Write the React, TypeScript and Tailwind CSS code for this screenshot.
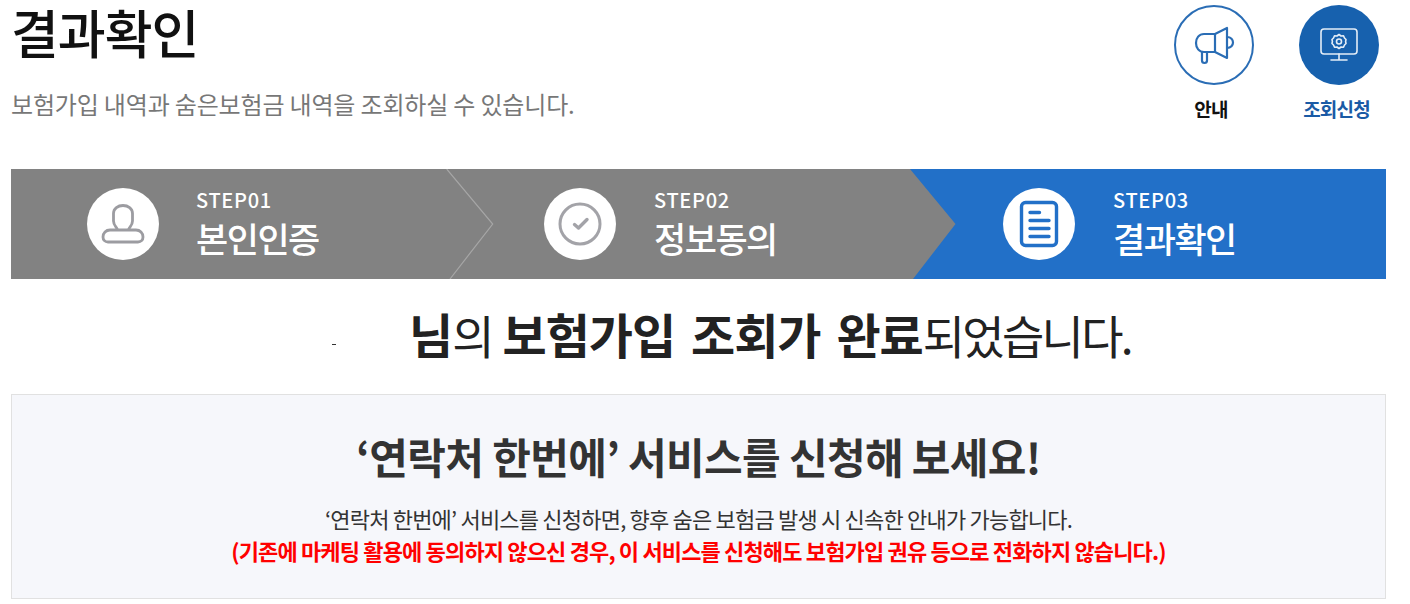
const font = { fontFamily: '"Noto Sans CJK KR", "Noto Sans", sans-serif' };

function Megaphone() {
  return (
    <svg width="46" height="46" viewBox="0 0 46 46" fill="none" stroke="#2a6db5" strokeWidth="2.2" strokeLinejoin="round" strokeLinecap="round">
      <path d="M13 12H24V30H13C8 30 5 26 5 21C5 16 8 12 13 12Z" />
      <path d="M24 12L36 6V36L24 30" />
      <path d="M36 15C40 15 42 18 42 20.500C42 23 40 26 36 26" />
      <path d="M11 30V38.500C11 40 12 41 13.500 41C15 41 16 40 16 38.500V30" />
    </svg>
  );
}

function Monitor() {
  return (
    <svg width="38" height="34" viewBox="0 0 38 34" fill="none" stroke="#e4edf7" strokeWidth="1.6" strokeLinejoin="round" strokeLinecap="round">
      <rect x="1" y="1" width="36" height="25" rx="3" />
      <path d="M19 26V32M11 32H27" />
      <circle cx="19" cy="13.500" r="2.500" />
      <path d="M19 6.500L21 8L23.500 7.800L24.500 10L26 11.500L25.600 13.500L26 15.500L24.500 17L23.500 19.200L21 19L19 20.500L17 19L14.500 19.200L13.500 17L12 15.500L12.400 13.500L12 11.500L13.500 10L14.500 7.800L17 8Z" />
    </svg>
  );
}

function Person() {
  return (
    <svg width="44" height="44" viewBox="0 0 44 44" fill="none" stroke="#9c9ca1" strokeWidth="2.800" strokeLinejoin="round">
      <path d="M16.500 28C16.500 25.500 12.500 24 12.500 19V11.500C12.500 6.500 17 3.500 22 3.500C27 3.500 31.500 6.500 31.500 11.500V19C31.500 24 27.500 25.500 27.500 28" />
      <path d="M9 28H35C39 28 42 31 42 35C42 38 40 40 37 40H7C4 40 2 38 2 35C2 31 5 28 9 28Z" />
    </svg>
  );
}

function Check() {
  return (
    <svg width="46" height="46" viewBox="0 0 46 46" fill="none" stroke="#a3a3a8" strokeLinecap="round" strokeLinejoin="round">
      <circle cx="23" cy="23" r="20" strokeWidth="3" />
      <path d="M17.500 23.500L21.500 27L30 18.500" strokeWidth="3.400" />
    </svg>
  );
}

function Doc() {
  return (
    <svg width="40" height="48" viewBox="0 0 40 48" fill="none" stroke="#2270c8" strokeWidth="3.400" strokeLinecap="round">
      <rect x="2.500" y="2.500" width="35" height="43" rx="4" />
      <path d="M11 12.500H20.500M11 20.500H30M11 28.500H30M11 36.500H30" />
    </svg>
  );
}

function Step({ no, title, icon, width, gap }: { no: string; title: string; icon: React.ReactNode; width: string; gap: string }) {
  return (
    <div className={`relative flex items-center pl-[76px] ${width}`}>
      <div className="flex h-[72px] w-[72px] shrink-0 items-center justify-center rounded-full bg-white">{icon}</div>
      <div className={`${gap} text-white`}>
        <div className="text-[20px] font-medium leading-[24px] tracking-[0.7px]">{no}</div>
        <div className="mt-[3px] text-[35px] font-medium leading-[46px] tracking-[-1.5px]">{title}</div>
      </div>
    </div>
  );
}

export default function App() {
  return (
    <div className="h-[604px] w-[1410px] overflow-hidden bg-white pl-[11px] pr-[24px]" style={font}>
      <header className="flex h-[169px] items-start justify-between">
        <div>
          <h1 className="text-[52px] font-medium leading-[64px] tracking-[-1px] text-[#111111]">결과확인</h1>
          <p className="mt-[24px] text-[24px] leading-[32px] tracking-[-0.17px] text-[#777777]">보험가입 내역과 숨은보험금 내역을 조회하실 수 있습니다.</p>
        </div>
        <div className="mr-[7px] flex gap-[45px] pt-[5px]">
          <div className="flex w-[80px] flex-col items-center">
            <div className="flex h-[80px] w-[80px] items-center justify-center rounded-full border-[2.500px] border-[#2a6db5] bg-white"><Megaphone /></div>
            <div className="mr-[6px] mt-[10px] text-[19px] font-bold leading-[28px] tracking-[-0.8px] text-[#111111]">안내</div>
          </div>
          <div className="flex w-[80px] flex-col items-center">
            <div className="flex h-[80px] w-[80px] items-center justify-center rounded-full bg-[#1761ae]"><Monitor /></div>
            <div className="mr-[5px] mt-[10px] whitespace-nowrap text-[19px] font-bold leading-[28px] tracking-[-0.8px] text-[#1a5aa5]">조회신청</div>
          </div>
        </div>
      </header>

      <div className="relative flex h-[110px] w-[1375px] overflow-hidden bg-[#828282]">
        <svg className="absolute left-[400px] top-0" width="975" height="110" viewBox="0 0 975 110">
          <path d="M499 0H975V110H502L544.500 55Z" fill="#2270c8" />
          <path d="M35.700 0L81.700 55L39 110" fill="none" stroke="#a6a6a6" strokeWidth="1.200" />
        </svg>
        <Step no="STEP01" title="본인인증" icon={<Person />} width="w-[457px]" gap="ml-[37px]" />
        <Step no="STEP02" title="정보동의" icon={<Check />} width="w-[459px]" gap="ml-[38px]" />
        <Step no="STEP03" title="결과확인" icon={<Doc />} width="w-[459px]" gap="ml-[38px]" />
      </div>

      <div className="relative flex h-[115px] w-[1375px] items-center justify-center pb-[6px] pl-[143px]">
        <span className="absolute left-[321px] top-[65px] h-px w-[4px] bg-[#333333]" />
        <h2 className="whitespace-nowrap text-[46px] leading-[60px] tracking-[-2.7px] text-[#222222] [word-spacing:3px]"><b className="text-[48px] font-bold tracking-[-1px] [word-spacing:6px]">님</b>의 <b className="text-[48px] font-bold tracking-[-1px] [word-spacing:6px]">보험가입 조회가 완료</b>되었습니다.</h2>
      </div>

      <div className="flex h-[205px] w-[1375px] flex-col items-center border border-[#e1e1e1] bg-[#f6f7fb] pt-[34px]">
        <h3 className="text-[42px] font-bold leading-[54px] tracking-[-0.65px] text-[#333333]">‘연락처 한번에’ 서비스를 신청해 보세요!</h3>
        <p className="mt-[19px] text-[22px] leading-[32px] tracking-[-0.8px] text-[#333333]">‘연락처 한번에’ 서비스를 신청하면, 향후 숨은 보험금 발생 시 신속한 안내가 가능합니다.</p>
        <p className="text-[22px] font-bold leading-[32px] tracking-[-0.85px] text-[#ff0000]">(기존에 마케팅 활용에 동의하지 않으신 경우, 이 서비스를 신청해도 보험가입 권유 등으로 전화하지 않습니다.)</p>
      </div>
    </div>
  );
}
